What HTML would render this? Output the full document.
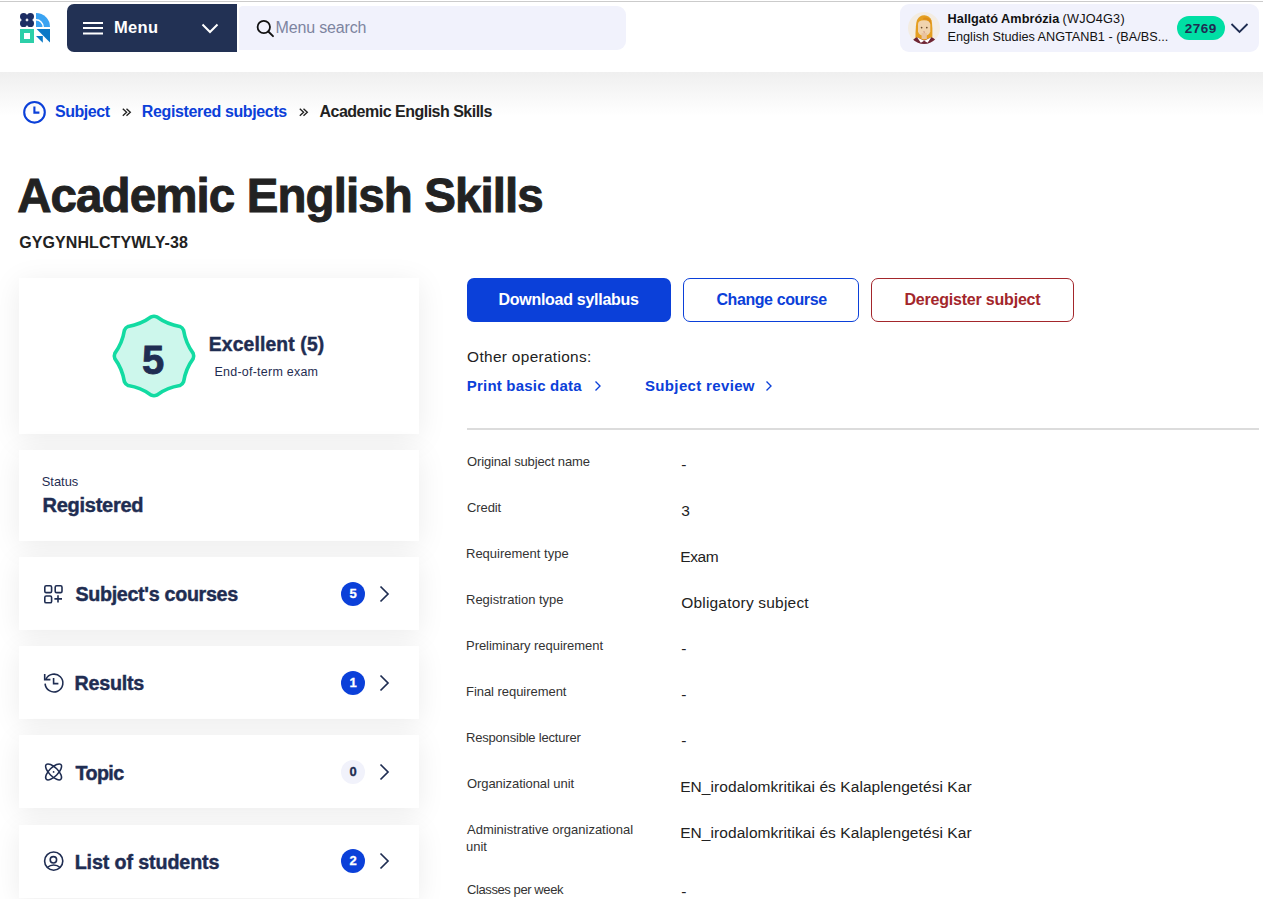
<!DOCTYPE html>
<html><head><meta charset="utf-8">
<style>
*{box-sizing:border-box;margin:0;padding:0}
html,body{width:1263px;height:899px;overflow:hidden;background:#fff;font-family:"Liberation Sans",sans-serif;color:#222}
.a{position:absolute}
.t{position:absolute;white-space:nowrap}
.card{position:absolute;left:19px;width:400px;background:#fff;box-shadow:0 5px 28px rgba(0,0,0,0.08)}
</style></head>
<body>
<div class="a" style="left:0;top:1px;width:1263px;height:1px;background:#cbcbcb"></div>
<div class="a" style="left:0;top:72px;width:1263px;height:44px;background:linear-gradient(#efefef,#fff)"></div>

<svg class="a" style="left:20px;top:13px" width="30" height="30" viewBox="0 0 30 30">
  <g fill="#1c2d63">
    <circle cx="3.6" cy="3.6" r="3.6"/><circle cx="10.4" cy="3.6" r="3.6"/>
    <circle cx="3.6" cy="10.4" r="3.6"/><circle cx="10.4" cy="10.4" r="3.6"/>
  </g>
  <path d="M16 0 A14 14 0 0 1 30 14 L16 14 Z" fill="#3aa3f2"/>
  <path d="M16 6.8 A7.2 7.2 0 0 1 23.2 14" fill="none" stroke="#fff" stroke-width="1.4"/>
  <rect x="0" y="16" width="14" height="14" fill="#2dcfa9"/>
  <rect x="4" y="20" width="6" height="6" fill="#fff"/>
  <path d="M16.6 16 L30 16 L30 29.4 Z" fill="#0a78c6"/>
  <path d="M16 23 L22.8 23 L22.8 29.8 Z" fill="#0a78c6"/>
</svg>

<div class="a" style="left:67px;top:4px;width:170px;height:48px;background:#223154;border-radius:7px 0 0 7px"></div>
<svg class="a" style="left:83px;top:21px" width="20" height="14" viewBox="0 0 20 14">
  <rect x="0" y="1" width="20" height="2" fill="#fff"/><rect x="0" y="6" width="20" height="2" fill="#fff"/><rect x="0" y="11.5" width="20" height="2" fill="#fff"/>
</svg>
<svg class="a" style="left:201px;top:23px" width="18" height="12" viewBox="0 0 18 12">
  <path d="M1.5 1.5 L9 9 L16.5 1.5" fill="none" stroke="#fff" stroke-width="2"/>
</svg>
<div class="a" style="left:239px;top:6px;width:387px;height:44px;background:#f1f2fc;border-radius:4px 9px 9px 0"></div>
<svg class="a" style="left:256px;top:19px" width="19" height="19" viewBox="0 0 19 19">
  <circle cx="7.8" cy="8" r="6.2" fill="none" stroke="#111" stroke-width="1.8"/>
  <path d="M12.3 12.5 L17 17.2" stroke="#111" stroke-width="1.9" stroke-linecap="round"/>
</svg>

<div class="a" style="left:900px;top:4px;width:359px;height:48px;background:#f1f2fc;border-radius:9px"></div>
<svg class="a" style="left:908px;top:12px" width="32" height="32" viewBox="0 0 32 32">
  <defs><clipPath id="avc"><circle cx="16" cy="16" r="16"/></clipPath></defs>
  <circle cx="16" cy="16" r="16" fill="#f3ece2"/>
  <g clip-path="url(#avc)">
    <path d="M7.4 28 Q7.5 12 9 8 Q11.5 3 16.5 3.2 Q21.5 3.5 23.6 8.5 Q24.7 13 24.3 28 Z" fill="#e59e1f"/>
    <path d="M10 12 Q10 8.2 16 8.2 Q22.3 8.2 22.3 12 L22.3 19.5 Q21 23.8 16.2 23.8 Q11.3 23.8 10 19.5 Z" fill="#f0d3ae"/>
    <path d="M15 7.6 Q20.5 6.5 22.6 12.5 L23 8.8 Q20.5 4.8 15.5 5.8 Z" fill="#dd8d17"/>
    <rect x="13.6" y="21" width="5.2" height="6" fill="#e9c39e"/>
    <path d="M2 36 Q3 27.5 9 25.3 L16.2 28.5 L23.5 25.3 Q29.5 27.5 30.5 36 Z" fill="#6e2535"/>
    <path d="M9 25.2 L16.2 28.8 L12.8 30.8 Z M23.4 25.2 L16.2 28.8 L19.6 30.8 Z" fill="#fff"/>
    <circle cx="13.6" cy="15.6" r="0.85" fill="#6b4a2c"/><circle cx="18.8" cy="15.6" r="0.85" fill="#6b4a2c"/>
    <path d="M15.4 19.8 Q16.2 20.6 17 19.8" stroke="#c98777" stroke-width="1" fill="none"/>
  </g>
</svg>
<div class="a" style="left:1177px;top:16px;width:48px;height:24px;border-radius:12px;background:#00dfa4"></div>
<svg class="a" style="left:1230px;top:22px" width="19" height="13" viewBox="0 0 19 13">
  <path d="M1.5 2 L9.5 10 L17.5 2" fill="none" stroke="#1f2d52" stroke-width="1.8"/>
</svg>

<svg class="a" style="left:22px;top:100px" width="25" height="25" viewBox="0 0 25 25">
  <circle cx="12.5" cy="12.3" r="10.3" fill="none" stroke="#0b40d9" stroke-width="2.1"/>
  <path d="M12.4 6.6 V12.6 H17.4" fill="none" stroke="#0b40d9" stroke-width="2.1"/>
</svg>

<svg class="a" style="left:122px;top:107.5px" width="10" height="9" viewBox="0 0 10 9" fill="none" stroke="#222" stroke-width="1.35"><path d="M0.8 0.8 L4.6 4.3 L0.8 7.8 M4.5 0.8 L8.3 4.3 L4.5 7.8"/></svg>
<svg class="a" style="left:299px;top:107.5px" width="10" height="9" viewBox="0 0 10 9" fill="none" stroke="#222" stroke-width="1.35"><path d="M0.8 0.8 L4.6 4.3 L0.8 7.8 M4.5 0.8 L8.3 4.3 L4.5 7.8"/></svg>
<div class="card" style="top:278px;height:156px"></div>
<div class="card" style="top:450px;height:91px"></div>
<div class="card" style="top:557px;height:73px"></div>
<div class="card" style="top:646px;height:73px"></div>
<div class="card" style="top:735px;height:73px"></div>
<div class="card" style="top:825px;height:73px"></div>

<svg class="a" style="left:110px;top:312px" width="88" height="88" viewBox="0 0 88 88">
  <path d="M46.68 4.83 Q57.09 12.39 69.80 14.41 A7.0 7.0 0 0 1 73.59 18.20 Q75.61 30.91 83.17 41.32 A7.0 7.0 0 0 1 83.17 46.68 Q75.61 57.09 73.59 69.80 A7.0 7.0 0 0 1 69.80 73.59 Q57.09 75.61 46.68 83.17 A7.0 7.0 0 0 1 41.32 83.17 Q30.91 75.61 18.20 73.59 A7.0 7.0 0 0 1 14.41 69.80 Q12.39 57.09 4.83 46.68 A7.0 7.0 0 0 1 4.83 41.32 Q12.39 30.91 14.41 18.20 A7.0 7.0 0 0 1 18.20 14.41 Q30.91 12.39 41.32 4.83 A7.0 7.0 0 0 1 46.68 4.83Z" fill="#cdf7ec" stroke="#12dba2" stroke-width="3.6"/>
</svg>
<div class="t" style="left:142px;top:340px;font-size:40px;line-height:40px;font-weight:bold;-webkit-text-stroke:0.8px #1f2d52;color:#1f2d52">5</div>

<svg class="a" style="left:44px;top:584px" width="20" height="20" viewBox="0 0 20 20" fill="none" stroke="#1f2d52" stroke-width="1.6">
  <rect x="0.8" y="1.8" width="6.8" height="6.8" rx="1.4"/><rect x="11.2" y="1.8" width="6.8" height="6.8" rx="1.4"/><rect x="0.8" y="12" width="6.8" height="6.8" rx="1.4"/>
  <path d="M10.4 14.9 H18 M14 11.2 V18.6"/>
</svg>
<svg class="a" style="left:41.6px;top:671px" width="24" height="24" viewBox="0 0 24 24" fill="none" stroke="#1f2d52" stroke-width="1.6">
  <path d="M3.1 12.6 A8.9 8.9 0 1 0 3.9 8.3"/><path d="M2.7 3 V8.6 H8.4"/><path d="M11.6 7 V12.6 H16.4"/>
</svg>
<svg class="a" style="left:44px;top:762px" width="20" height="20" viewBox="0 0 20 20" fill="none" stroke="#1f2d52" stroke-width="1.5">
  <ellipse cx="9.6" cy="9.9" rx="10.4" ry="4.4" transform="rotate(45 9.6 9.9)"/><ellipse cx="9.6" cy="9.9" rx="10.4" ry="4.4" transform="rotate(-45 9.6 9.9)"/>
  <circle cx="9.6" cy="9.9" r="0.9" fill="#1f2d52" stroke="none"/>
</svg>
<svg class="a" style="left:42px;top:849px" width="24" height="24" viewBox="0 0 24 24" fill="none" stroke="#1f2d52" stroke-width="1.6">
  <circle cx="11.7" cy="12.1" r="9.1"/><circle cx="11.4" cy="10.8" r="3.2"/><path d="M5 18.6 Q11.7 13.4 18.4 18.6"/>
</svg>
<div class="a" style="left:341px;top:582px;width:24px;height:24px;border-radius:12px;background:#0b40d9;color:#fff;font-size:13px;font-weight:bold;line-height:24px;text-align:center;-webkit-text-stroke:0.3px #fff">5</div>
<svg class="a" style="left:378.5px;top:585px" width="11" height="18" viewBox="0 0 11 18"><path d="M1.5 1.5 L9 9.0 L1.5 16.5" fill="none" stroke="#1f2d52" stroke-width="1.7"/></svg>
<div class="a" style="left:341px;top:671px;width:24px;height:24px;border-radius:12px;background:#0b40d9;color:#fff;font-size:13px;font-weight:bold;line-height:24px;text-align:center;-webkit-text-stroke:0.3px #fff">1</div>
<svg class="a" style="left:378.5px;top:674px" width="11" height="18" viewBox="0 0 11 18"><path d="M1.5 1.5 L9 9.0 L1.5 16.5" fill="none" stroke="#1f2d52" stroke-width="1.7"/></svg>
<div class="a" style="left:341px;top:760px;width:24px;height:24px;border-radius:12px;background:#f1f2fb;color:#1f2d52;font-size:13px;font-weight:bold;line-height:24px;text-align:center;-webkit-text-stroke:0.3px #1f2d52">0</div>
<svg class="a" style="left:378.5px;top:763px" width="11" height="18" viewBox="0 0 11 18"><path d="M1.5 1.5 L9 9.0 L1.5 16.5" fill="none" stroke="#1f2d52" stroke-width="1.7"/></svg>
<div class="a" style="left:341px;top:849px;width:24px;height:24px;border-radius:12px;background:#0b40d9;color:#fff;font-size:13px;font-weight:bold;line-height:24px;text-align:center;-webkit-text-stroke:0.3px #fff">2</div>
<svg class="a" style="left:378.5px;top:852px" width="11" height="18" viewBox="0 0 11 18"><path d="M1.5 1.5 L9 9.0 L1.5 16.5" fill="none" stroke="#1f2d52" stroke-width="1.7"/></svg>


<div class="a" style="left:467px;top:278px;width:204px;height:44px;border-radius:7px;background:#0b40d9"></div>
<div class="a" style="left:683px;top:278px;width:176px;height:44px;border-radius:7px;border:1px solid #0b40d9"></div>
<div class="a" style="left:871px;top:278px;width:203px;height:44px;border-radius:7px;border:1px solid #a3262b"></div>
<svg class="a" style="left:594px;top:380px" width="8" height="12" viewBox="0 0 8 12"><path d="M1.5 1.5 L6 6.0 L1.5 10.5" fill="none" stroke="#0b40d9" stroke-width="1.35"/></svg>
<svg class="a" style="left:765px;top:380px" width="8" height="12" viewBox="0 0 8 12"><path d="M1.5 1.5 L6 6.0 L1.5 10.5" fill="none" stroke="#0b40d9" stroke-width="1.35"/></svg>
<div class="a" style="left:467px;top:428px;width:792px;height:2px;background:#dcdcdc"></div>

<div class="t" style="left:114px;top:19.2px;font-size:16.5px;line-height:16.5px;font-weight:bold;letter-spacing:0.333px;color:#fff">Menu</div>
<div class="t" style="left:275.6px;top:20.2px;font-size:16px;line-height:16px;letter-spacing:-0.16px;color:#7d84a0">Menu search</div>
<div class="t" style="left:947.6px;top:13px;font-size:12.7px;line-height:12.7px;font-weight:bold;letter-spacing:0.044px;color:#111">Hallgató Ambrózia</div>
<div class="t" style="left:1062.5px;top:13px;font-size:12.7px;line-height:12.7px;letter-spacing:0.214px;color:#111">(WJO4G3)</div>
<div class="t" style="left:947.6px;top:30.7px;font-size:12.7px;line-height:12.7px;letter-spacing:-0.017px;color:#111">English Studies ANGTANB1 - (BA/BS...</div>
<div class="t" style="left:1184.8px;top:21.9px;font-size:13.5px;line-height:13.5px;font-weight:bold;letter-spacing:0.5px;color:#1f2d52">2769</div>
<div class="t" style="left:55.1px;top:103.8px;font-size:16px;line-height:16px;font-weight:bold;letter-spacing:-0.483px;color:#0b40d9">Subject</div>
<div class="t" style="left:141.8px;top:103.8px;font-size:16px;line-height:16px;font-weight:bold;letter-spacing:-0.367px;color:#0b40d9">Registered subjects</div>
<div class="t" style="left:319.5px;top:103.8px;font-size:16px;line-height:16px;font-weight:bold;letter-spacing:-0.505px;color:#222">Academic English Skills</div>
<div class="t" style="left:17.2px;top:171.9px;font-size:47.5px;line-height:47.5px;font-weight:bold;letter-spacing:-0.905px;-webkit-text-stroke:0.9px #222;color:#222">Academic English Skills</div>
<div class="t" style="left:19.3px;top:234.7px;font-size:16px;line-height:16px;font-weight:bold;letter-spacing:0.073px;color:#222">GYGYNHLCTYWLY-38</div>
<div class="t" style="left:208.8px;top:334.7px;font-size:19.3px;line-height:19.3px;font-weight:bold;letter-spacing:0.15px;-webkit-text-stroke:0.45px #1f2d52;color:#1f2d52">Excellent (5)</div>
<div class="t" style="left:214.5px;top:365.8px;font-size:12.5px;line-height:12.5px;letter-spacing:0.233px;color:#1f2d52">End-of-term exam</div>
<div class="t" style="left:41.8px;top:475.8px;font-size:12.9px;line-height:12.9px;letter-spacing:-0.02px;color:#1f2d52">Status</div>
<div class="t" style="left:42.6px;top:494.6px;font-size:20px;line-height:20px;font-weight:bold;letter-spacing:-0.278px;-webkit-text-stroke:0.45px #1f2d52;color:#1f2d52">Registered</div>
<div class="t" style="left:75.4px;top:584.7px;font-size:19.7px;line-height:19.7px;font-weight:bold;letter-spacing:-0.306px;-webkit-text-stroke:0.45px #1f2d52;color:#1f2d52">Subject's courses</div>
<div class="t" style="left:74.6px;top:673.9px;font-size:19.7px;line-height:19.7px;font-weight:bold;letter-spacing:-0.25px;-webkit-text-stroke:0.45px #1f2d52;color:#1f2d52">Results</div>
<div class="t" style="left:75.4px;top:764px;font-size:19.7px;line-height:19.7px;font-weight:bold;letter-spacing:-0.55px;-webkit-text-stroke:0.45px #1f2d52;color:#1f2d52">Topic</div>
<div class="t" style="left:74.7px;top:852.7px;font-size:19.7px;line-height:19.7px;font-weight:bold;letter-spacing:-0.12px;-webkit-text-stroke:0.45px #1f2d52;color:#1f2d52">List of students</div>
<div class="t" style="left:498.5px;top:292.2px;font-size:16px;line-height:16px;font-weight:bold;letter-spacing:-0.281px;color:#fff">Download syllabus</div>
<div class="t" style="left:716.4px;top:291.6px;font-size:16px;line-height:16px;font-weight:bold;letter-spacing:-0.408px;color:#0b40d9">Change course</div>
<div class="t" style="left:904.4px;top:291.8px;font-size:16px;line-height:16px;font-weight:bold;letter-spacing:-0.2px;color:#a3262b">Deregister subject</div>
<div class="t" style="left:467.1px;top:349.1px;font-size:15.4px;line-height:15.4px;letter-spacing:0.331px;color:#222">Other operations:</div>
<div class="t" style="left:466.8px;top:377.6px;font-size:15px;line-height:15px;font-weight:bold;letter-spacing:0.2px;color:#0b40d9">Print basic data</div>
<div class="t" style="left:645px;top:377.6px;font-size:15px;line-height:15px;font-weight:bold;letter-spacing:0.346px;color:#0b40d9">Subject review</div>
<div class="t" style="left:467px;top:454.9px;font-size:13px;line-height:13px;letter-spacing:-0.14px;color:#333">Original subject name</div>
<div class="t" style="left:467px;top:500.9px;font-size:13px;line-height:13px;letter-spacing:-0.1px;color:#333">Credit</div>
<div class="t" style="left:466px;top:546.9px;font-size:13px;line-height:13px;color:#333">Requirement type</div>
<div class="t" style="left:466px;top:592.9px;font-size:13px;line-height:13px;color:#333">Registration type</div>
<div class="t" style="left:466px;top:638.9px;font-size:13px;line-height:13px;letter-spacing:-0.045px;color:#333">Preliminary requirement</div>
<div class="t" style="left:466px;top:684.9px;font-size:13px;line-height:13px;letter-spacing:-0.044px;color:#333">Final requirement</div>
<div class="t" style="left:466px;top:730.9px;font-size:13px;line-height:13px;letter-spacing:-0.195px;color:#333">Responsible lecturer</div>
<div class="t" style="left:467px;top:776.9px;font-size:13px;line-height:13px;letter-spacing:-0.072px;color:#333">Organizational unit</div>
<div class="t" style="left:467px;top:822.9px;font-size:13px;line-height:13px;color:#333">Administrative organizational</div>
<div class="t" style="left:466px;top:840.3px;font-size:13px;line-height:13px;color:#333">unit</div>
<div class="t" style="left:467px;top:882.5px;font-size:13px;line-height:13px;letter-spacing:-0.407px;color:#333">Classes per week</div>
<div class="t" style="left:681.2px;top:456.7px;font-size:15.5px;line-height:15.5px;color:#222">-</div>
<div class="t" style="left:681.2px;top:502.7px;font-size:15.5px;line-height:15.5px;color:#222">3</div>
<div class="t" style="left:680.2px;top:548.7px;font-size:15.5px;line-height:15.5px;letter-spacing:-0.4px;color:#222">Exam</div>
<div class="t" style="left:681.2px;top:594.7px;font-size:15.5px;line-height:15.5px;letter-spacing:0.2px;color:#222">Obligatory subject</div>
<div class="t" style="left:681.2px;top:640.7px;font-size:15.5px;line-height:15.5px;color:#222">-</div>
<div class="t" style="left:681.2px;top:686.7px;font-size:15.5px;line-height:15.5px;color:#222">-</div>
<div class="t" style="left:681.2px;top:732.7px;font-size:15.5px;line-height:15.5px;color:#222">-</div>
<div class="t" style="left:680.2px;top:778.9px;font-size:15.5px;line-height:15.5px;letter-spacing:0.07px;color:#222">EN_irodalomkritikai és Kalaplengetési Kar</div>
<div class="t" style="left:680.2px;top:824.9px;font-size:15.5px;line-height:15.5px;letter-spacing:0.07px;color:#222">EN_irodalomkritikai és Kalaplengetési Kar</div>
<div class="t" style="left:681.2px;top:884.3px;font-size:15.5px;line-height:15.5px;color:#222">-</div>
</body></html>
